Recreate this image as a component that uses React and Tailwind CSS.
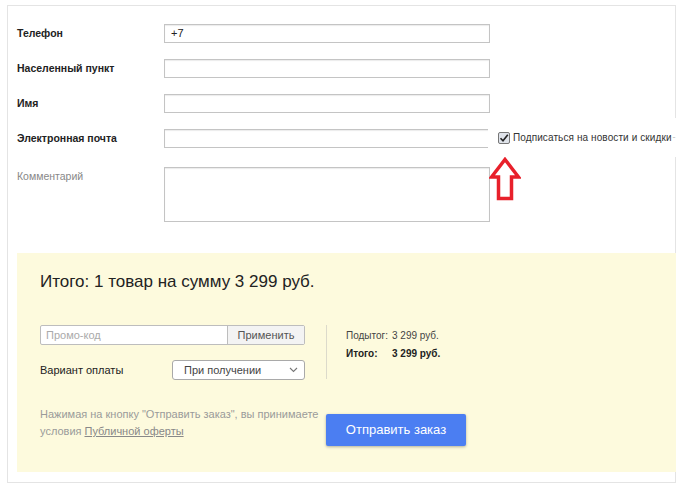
import React from 'react';

const fields = [
  { label: 'Телефон', value: '+7' },
  { label: 'Населенный пункт', value: '' },
  { label: 'Имя', value: '' },
];

export default function App() {
  return (
    <div className="w-[700px] h-[483px] bg-white pt-[5px] pl-[7px] font-['Liberation_Sans',Arial,sans-serif]">
      <div className="relative w-[669px] h-[478px] border border-[#e4e4e4] pl-[9px] pt-[18px]">
        {/* Form fields */}
        <div className="flex flex-col gap-[16px]">
          {fields.map((f) => (
            <div key={f.label} className="flex items-center h-[19px]">
              <div className="w-[147px] text-[10.5px] font-bold text-[#222]">{f.label}</div>
              <div className="w-[326px] h-[19px] border border-[#c4c4c4] shadow-[inset_0_1px_1px_rgba(0,0,0,0.08)] px-[6px] text-[11px] leading-[17px] text-[#222]">
                {f.value}
              </div>
            </div>
          ))}
          <div className="relative flex items-center h-[19px]">
            <div className="w-[147px] text-[10.5px] font-bold text-[#222]">Электронная почта</div>
            <div className="w-[326px] h-[19px] border border-[#c4c4c4] shadow-[inset_0_1px_1px_rgba(0,0,0,0.08)]"></div>

            {/* Subscribe checkbox overlay */}
            <div className="absolute left-[471px] top-[-11px] w-[189px] h-[39px] bg-white flex items-center pl-[10px]">
              <div className="w-[12px] h-[12px] rounded-[2px] border border-[#777] bg-[#dfe3ea] flex items-center justify-center">
                <svg width="10" height="10" viewBox="0 0 10 10">
                  <path d="M1.5 5.2 L4 7.8 L8.8 1.8" fill="none" stroke="#222" strokeWidth="1.6" />
                </svg>
              </div>
              <span className="ml-[3px] text-[10px] text-[#333] tracking-[0.1px] whitespace-nowrap">Подписаться на новости и скидки</span>
              <span className="ml-[1px] text-[9px] text-[#bbb]">-</span>
            </div>
            <svg className="absolute left-[472px] top-[28px]" width="32" height="44" viewBox="0 0 32 44">
              <path d="M16 2.5 L29.5 20 L22.5 20 L22.5 41.5 L9.5 41.5 L9.5 20 L2.5 20 Z" fill="none" stroke="#e8202b" strokeWidth="3.5" strokeLinejoin="miter" />
            </svg>
          </div>
          <div className="flex items-start mt-[3px]">
            <div className="w-[147px] text-[10.5px] text-[#888] pt-[2px]">Комментарий</div>
            <div className="w-[326px] h-[55px] border border-[#c4c4c4] shadow-[inset_0_1px_1px_rgba(0,0,0,0.08)]"></div>
          </div>
        </div>

        {/* Summary block */}
        <div className="mt-[31px] w-[659px] h-[219px] bg-[#fdfadd] pl-[23px] pt-[19px]">
          <div className="text-[17px] text-[#222] leading-[20px]">Итого: 1 товар на сумму 3 299 руб.</div>

          <div className="flex mt-[33px]">
            <div className="w-[265px] flex flex-col gap-[15px]">
              <div className="flex h-[20px] border border-[#bdbdbd] bg-white rounded-[2px]">
                <div className="flex-1 px-[5px] text-[11px] leading-[18px] text-[#aaa]">Промо-код</div>
                <div className="w-[77px] border-l border-[#bdbdbd] bg-[#f3f3f3] text-center text-[11px] leading-[18px] text-[#555]">Применить</div>
              </div>
              <div className="flex items-center justify-between">
                <span className="text-[11px] text-[#222]">Вариант оплаты</span>
                <div className="w-[133px] h-[20px] border border-[#a9a9a9] bg-white rounded-[3px] flex items-center justify-between pl-[11px] pr-[6px]">
                  <span className="text-[11px] text-[#444]">При получении</span>
                  <svg width="9" height="6" viewBox="0 0 9 6">
                    <path d="M1 1 L4.5 4.5 L8 1" fill="none" stroke="#777" strokeWidth="1.1" />
                  </svg>
                </div>
              </div>
            </div>
            <div className="ml-[21px] w-px h-[54px] bg-[#dcdacb]"></div>
            <div className="ml-[19px] pt-[2px] text-[10px] leading-[18px]">
              <div className="flex text-[#444]">
                <span className="w-[46px]">Подытог:</span>
                <span>3 299 руб.</span>
              </div>
              <div className="flex font-bold text-[#222]">
                <span className="w-[46px]">Итого:</span>
                <span>3 299 руб.</span>
              </div>
            </div>
          </div>

          <div className="flex mt-[26px]">
            <div className="w-[286px] text-[11px] leading-[17px] text-[#9a9a9a]">
              <div>Нажимая на кнопку "Отправить заказ", вы принимаете</div>
              <div className="flex gap-[3px]">
                <span>условия</span>
                <a className="underline text-[#888]">Публичной оферты</a>
              </div>
            </div>
            <button className="mt-[8px] w-[140px] h-[32px] bg-[#4b7ef2] rounded-[2px] text-white text-[13px] shadow-[0_1px_3px_rgba(0,0,0,0.3)]">
              Отправить заказ
            </button>
          </div>
        </div>
      </div>
    </div>
  );
}
